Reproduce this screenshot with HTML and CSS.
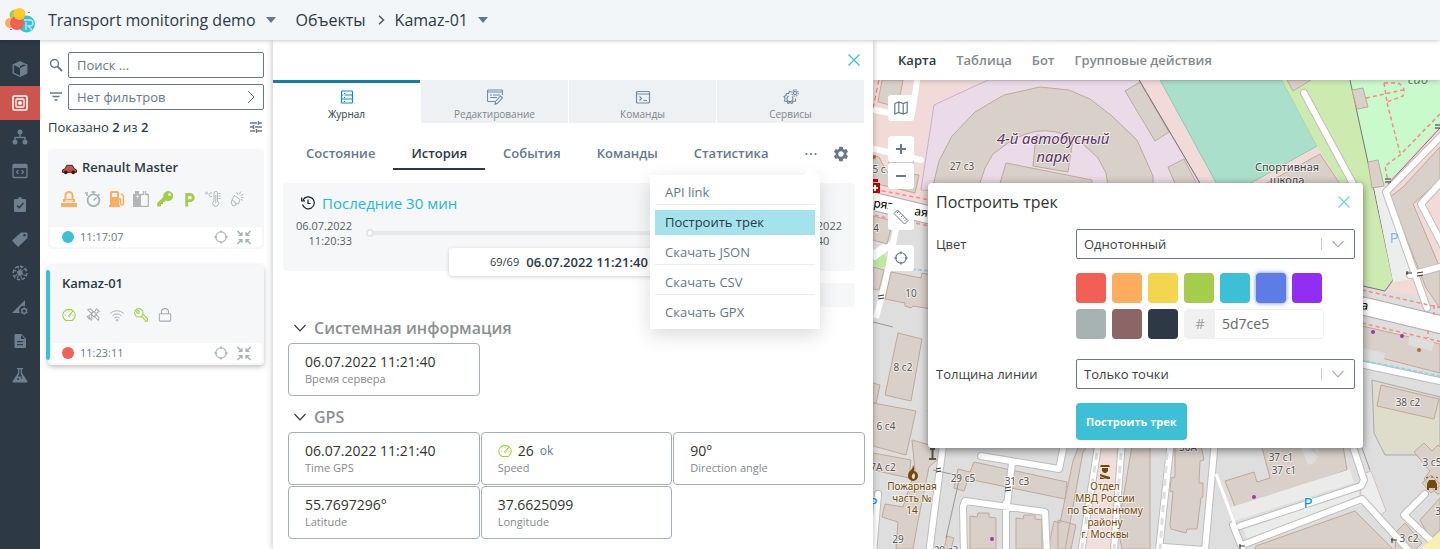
FILE: index.html
```html
<!DOCTYPE html>
<html lang="ru">
<head>
<meta charset="utf-8">
<title>Transport monitoring demo</title>
<link rel="stylesheet" href="styles.css">
</head>
<body>
<svg class="sprite" aria-hidden="true">
  <symbol id="i-target" viewBox="0 0 16 16"><circle cx="8" cy="8" r="6" fill="none" stroke="currentColor" stroke-width="1.3"/><path d="M8 .5v3M8 12.500v3M.5 8h3M12.500 8h3" stroke="currentColor" stroke-width="1.600"/></symbol>
  <symbol id="i-shrink" viewBox="0 0 16 16"><path d="M1 1l4 4M15 1l-4 4M1 15l4-4M15 15l-4-4" fill="none" stroke="currentColor" stroke-width="1.600"/><path d="M6.500 1.500v5h-5zM9.500 1.500v5h5zM1.500 9.500h5v5zM14.500 9.500h-5v5z" fill="currentColor"/></symbol>
  <symbol id="i-gauge" viewBox="0 0 16 16"><path d="M4.500 14.300a7.100 6.800 0 1 1 7 0z" fill="none" stroke="currentColor" stroke-width="1.200"/><path d="M7 9l5-5.200L8.500 10zM3 8h1.500M4.500 4l1 1M8 2.800v1.400M12 8.500h1.500" fill="none" stroke="currentColor"/></symbol>
  <symbol id="i-close" viewBox="0 0 12 12"><path d="M.5.5l11 11M11.500.5l-11 11" stroke="currentColor" fill="none" stroke-width="1.200"/></symbol>
  <symbol id="i-down" viewBox="0 0 12 8"><path d="M.5 1L6 6.800 11.500 1" stroke="currentColor" fill="none" stroke-width="1.200"/></symbol>
  <symbol id="i-cog" viewBox="0 0 24 24"><path fill="currentColor" d="M19.140 12.940c.04-.3.060-.610.060-.940s-.02-.640-.070-.940l2.030-1.580a.490.490 0 0 0 .120-.610l-1.920-3.320a.488.488 0 0 0-.590-.220l-2.390.960a7.030 7.030 0 0 0-1.620-.940l-.360-2.540a.484.484 0 0 0-.480-.410h-3.840c-.240 0-.430.170-.470.410l-.360 2.540c-.590.240-1.130.570-1.620.940l-2.390-.960a.480.480 0 0 0-.590.220L2.740 8.870c-.120.210-.080.470.120.610l2.030 1.580c-.050.3-.090.630-.090.940s.02.640.070.940l-2.030 1.580a.490.490 0 0 0-.120.610l1.920 3.320c.120.220.370.290.590.220l2.390-.960c.5.380 1.030.7 1.620.940l.360 2.540c.05.240.240.410.480.410h3.840c.240 0 .440-.170.470-.410l.360-2.540c.590-.240 1.130-.560 1.620-.940l2.390.960c.220.080.470 0 .590-.220l1.920-3.320a.480.480 0 0 0-.120-.610zM12 15.600a3.600 3.600 0 1 1 0-7.200 3.600 3.600 0 0 1 0 7.200z"/></symbol>
</svg>

<header class="topbar">
  <a class="logo" href="#" aria-label="Home"><svg width="32" height="28" viewBox="0 0 32 28">
    <circle cx="11" cy="9" r="5.500" fill="#a3cd4a"/><circle cx="6" cy="17" r="5" fill="#ffad5f"/><circle cx="22.500" cy="18" r="8.500" fill="#3dc0d5"/><circle cx="13" cy="17" r="7" fill="#f25f57"/><circle cx="15.500" cy="8" r="6" fill="#fbcb2e"/>
    <path d="M22 24v-8M20 14h6a3 3 0 0 1 0 6h-2l4 4" fill="none" stroke="#b9ecf2" stroke-width="1.300"/><path d="M6 23h2v1H6zM24 6h2v1h-2z" fill="#f25f57"/></svg></a>
  <button class="crumb">Transport monitoring demo<span class="caret"></span></button>
  <a class="crumb objects" href="#">Объекты</a>
  <svg class="sep" width="7" height="10" viewBox="0 0 7 10"><path d="M1 .8L5.500 5 1 9.200" fill="none" stroke="#4c5967" stroke-width="1.500"/></svg>
  <button class="crumb">Kamaz-01<span class="caret"></span></button>
</header>

<div class="app">
  <nav class="rail" aria-label="Разделы">
    <a href="#" aria-label="Модели"><svg viewBox="0 0 16 16"><path d="M8 .8l6.800 3v8.400L8 15.300 1.200 12.200V3.800z" fill="none" stroke="#8091a2" stroke-width="1.300"/><path d="M8 7l6.500-3v8.200L8 15zM1.500 4L8 7V5l5-2L8 1z" fill="#8091a2"/></svg></a>
    <a href="#" class="on" aria-label="Объекты"><svg viewBox="0 0 16 16" fill="none" stroke="#fff"><rect x="1" y="1" width="14" height="14" rx="1.500" stroke-width="1.600"/><rect x="4" y="4" width="8" height="8" rx="1" stroke-width="1.300"/><circle cx="8" cy="8" r="2" fill="#fff" stroke="none"/></svg></a>
    <a href="#" aria-label="Структура"><svg viewBox="0 0 16 16"><circle cx="8" cy="3" r="2.500" fill="#8091a2"/><path d="M8 5v4M3 12V8.500h10V12" fill="none" stroke="#8091a2" stroke-width="1.300"/><circle cx="3" cy="13" r="2.500" fill="#8091a2"/><circle cx="13" cy="13" r="2.500" fill="#8091a2"/></svg></a>
    <a href="#" aria-label="Скрипты"><svg viewBox="0 0 16 16" fill="none" stroke="#8091a2" stroke-width="1.300"><rect x="1" y="1.500" width="14" height="13" rx="1"/><path d="M1 3.500h14" stroke-width="3"/><path d="M6.500 7L4.500 9l2 2M9.500 7l2 2-2 2"/></svg></a>
    <a href="#" aria-label="Задачи"><svg viewBox="0 0 16 16"><path d="M3 2h3a2 2 0 0 1 4 0h3a1 1 0 0 1 1 1v11a1 1 0 0 1-1 1H3a1 1 0 0 1-1-1V3a1 1 0 0 1 1-1z" fill="#8091a2"/><path d="M5 8.500l2.200 2.200L11.500 6" fill="none" stroke="#2d3945" stroke-width="1.500"/></svg></a>
    <a href="#" aria-label="Метки"><svg viewBox="0 0 16 16"><path fill-rule="evenodd" d="M9 1.500h5.500a1 1 0 0 1 1 1V7L7 15.200a1.200 1.200 0 0 1-1.700 0L.8 10.500a1.200 1.200 0 0 1 0-1.700zM12.500 3a1.300 1.300 0 1 0 0 2.600 1.300 1.300 0 0 0 0-2.600z" fill="#8091a2"/></svg></a>
    <a href="#" aria-label="Геозоны"><svg viewBox="0 0 16 16" fill="none" stroke="#8091a2"><circle cx="8" cy="8" r="6.800" stroke-width="1.600" stroke-dasharray="3.500 1.800"/><path d="M2 5l12 6M3 11L13 4M6 1l4 14M10 1L5 14" stroke-width="1.200" stroke-dasharray="2.500 1"/><rect x="5.500" y="5.500" width="5" height="5" rx="1" fill="#8091a2" stroke="none" transform="rotate(-25 8 8)"/></svg></a>
    <a href="#" aria-label="Каналы"><svg viewBox="0 0 16 16"><path d="M0 14L13 1v6a4.500 4.500 0 0 0-5 7z" fill="#8091a2"/><circle cx="12.200" cy="12" r="2.300" fill="none" stroke="#8091a2" stroke-width="1.400"/><path d="M12.200 8.200v1.500M12.200 14.300v1.500M9 10l1.300.8M14.200 13.200l1.300.8M9 14l1.300-.8M14.200 10.800l1.300-.8" stroke="#8091a2" stroke-width="1.200"/></svg></a>
    <a href="#" aria-label="Отчеты"><svg viewBox="0 0 16 16"><path fill-rule="evenodd" d="M3 1h6.500L14 5.500V14a1 1 0 0 1-1 1H3.500a1 1 0 0 1-1-1V2zM9 2v4h4zM5 8v1.200h6V8zm0 3v1.200h6V11z" fill="#8091a2"/></svg></a>
    <a href="#" aria-label="Лаборатория"><svg viewBox="0 0 16 16"><path d="M5 1h6v1.300h-1V6l5.300 8a1 1 0 0 1-.8 1.500h-13A1 1 0 0 1 .7 14L6 6V2.300H5z" fill="#8091a2"/><path d="M7.300 2.300h1.400V7l1.500 2.500H5.800L7.300 7z" fill="#2d3945"/><circle cx="6" cy="12" r=".9" fill="#2d3945"/><circle cx="9.500" cy="11" r=".8" fill="#2d3945"/></svg></a>
  </nav>

  <aside class="list">
    <div class="field-row">
      <label for="q" aria-label="Поиск"><svg width="14" height="14" viewBox="0 0 14 14" fill="none" stroke="#687888" stroke-width="1.400"><circle cx="5.500" cy="5.500" r="4"/><path d="M8.500 8.500l4.500 4.500" stroke-width="1.800"/></svg></label>
      <input id="q" class="box" type="text" placeholder="Поиск ...">
    </div>
    <div class="field-row">
      <svg width="14" height="14" viewBox="0 0 14 14" stroke="#687888" stroke-width="1.300"><path d="M1 3h12M3.500 6.500h7M5.500 10h3"/></svg>
      <button class="box filter">Нет фильтров<svg width="8" height="14" viewBox="0 0 8 14"><path d="M1 1l6 6-6 6" fill="none" stroke="#687888"/></svg></button>
    </div>
    <div class="shown"><span>Показано <b>2</b> из <b>2</b></span><svg width="14" height="14" viewBox="0 0 14 14" stroke="#687888" stroke-width="1.400"><path d="M1 3h7M10 3h3M1 7h3M6 7h7M1 11h5M8 11h5M9.500 1v4M4.500 5v4M7.500 9v4"/></svg></div>

    <article class="card">
      <h3><svg width="15" height="11" viewBox="0 0 16 11"><path d="M.5 6l3-1.500L5 1h6l2 3.500 2.500 1.500v2.500H.5z" fill="#e8402a" stroke="#4a2020"/><path d="M5.500 2h2v2.500h-3zM8.500 2h2l1.300 2.500H8.500z" fill="#6b7f8e"/><circle cx="4" cy="8.500" r="2" fill="#222"/><circle cx="12" cy="8.500" r="2" fill="#222"/></svg>Renault Master</h3>
      <div class="sensors">
        <svg viewBox="0 0 16 16"><path d="M4.500 8V4.500a3.500 3.500 0 0 1 7 0V8" fill="none" stroke="#ffad5f" stroke-width="2"/><path d="M2 8h12v3H2zM0 12h16v4H0z" fill="#ffad5f"/><path d="M4 10h8" stroke="#fff"/></svg>
        <svg viewBox="0 0 16 16" fill="none" stroke="#a7b2b2"><circle cx="8.500" cy="9.300" r="5.900" stroke-width="1.800"/><path d="M8.500 9.500l3-3M6.500 1h4M8.500 1v3M13 3l1.500 1.500M0 2h3M1 4h2" stroke-width="1.500"/></svg>
        <svg viewBox="0 0 16 16"><path fill-rule="evenodd" d="M1 1.500A1.500 1.500 0 0 1 2.500 0h6A1.500 1.500 0 0 1 10 1.500V14h1v2H0v-2h1zM3 2v4h5V2z" fill="#ffad5f"/><path d="M10 8h1.500v4.500a1.500 1.500 0 0 0 3 0V5L12 2.500" fill="none" stroke="#ffad5f" stroke-width="1.500"/></svg>
        <svg viewBox="0 0 16 16"><path d="M0 3h2V0h4v3h2v13H0z" fill="#b5b5b5"/><path d="M8 3.500h2.500M10.500 0v4M12.500 0v4M12.500 3.500h2.800v11.800H8" fill="none" stroke="#b5b5b5" stroke-width="1.300"/><path d="M4.500 3.500L3 6h1.500L4 8l2-3H4.500z" fill="#f5f7f9"/></svg>
        <svg viewBox="0 0 16 16"><path fill-rule="evenodd" d="M11 0a5 5 0 1 1-2 9.500L7.500 11H6v2H4v2.500H.2V12L6.300 6A5 5 0 0 1 11 0zm1.500 2.200a1.400 1.400 0 1 0 0 2.800 1.400 1.400 0 0 0 0-2.800z" fill="#a3cd4a"/></svg>
        <svg viewBox="0 0 16 16"><path d="M5.700 15.500V3.500h3.500a3 3 0 0 1 0 6.200h-3.500" fill="none" stroke="#a3cd4a" stroke-width="2.800"/></svg>
        <svg viewBox="0 0 16 16" fill="none" stroke="#b5b9bc"><circle cx="1.500" cy="2" r="1"/><path d="M7 2a2 2 0 1 0 0 3.500M9 10V2a1.700 1.700 0 0 1 3.500 0v8a3 3 0 1 1-3.500 0zM10.800 4v8M13.500 2.500h2M13.500 5h2M13.500 7.500h2"/></svg>
        <svg viewBox="0 0 16 16" fill="none" stroke="#b5b9bc"><path d="M5.500 4.500l5.500 4M3 9l2.500-4.500M11 8.500L9.500 13 6 12.500M3 9l-1 3 2 3 3-1-1-3zM8.500 3.500L8 1.500M10 3.500l2-3M11.500 5l3-2M12 6.500h2.500M12 8l2 1.500"/></svg>
      </div>
      <footer><span class="dot teal"></span><time>11:17:07</time><button aria-label="Показать"><svg width="14" height="14"><use href="#i-target"/></svg></button><button aria-label="Следить"><svg width="16" height="15"><use href="#i-shrink"/></svg></button></footer>
    </article>
    <article class="card current">
      <h3>Kamaz-01</h3>
      <div class="sensors small">
        <svg class="green"><use href="#i-gauge"/></svg>
        <svg viewBox="0 0 16 16" fill="none" stroke="#a7abae" stroke-width="1.200"><path d="M6 7l3-3 3 3-3 3zM2 2l3-1 3 3-2 2zM10 10l2-2 3 3-1 3zM10 4l2-3 3 3-3 2M6 7l-3 2 3 5 1-2-1-5M1 9l3 4"/></svg>
        <svg viewBox="0 0 16 16" fill="none" stroke="#a7abae"><path d="M0 6.500a11 11 0 0 1 16 0M2.700 9a7.500 7.500 0 0 1 10.600 0M5 11.500a4.500 4.500 0 0 1 6 0"/><circle cx="8" cy="14" r="1"/></svg>
        <svg viewBox="0 0 16 16" fill="none" stroke="#a3cd4a" stroke-width="1.200"><circle cx="5.500" cy="5.500" r="4.800"/><circle cx="4.500" cy="4.500" r="1.500"/><path d="M7 10l3 .5 1 2h1.500l.5 2.500h2.300v-3L10 7"/></svg>
        <svg viewBox="0 0 16 16" fill="none" stroke="#a7abae" stroke-width="1.200"><rect x="1.500" y="6.500" width="13" height="8.500" rx="1"/><path d="M4 6.500V4.300a4 3.600 0 0 1 8 0v2.200"/></svg>
      </div>
      <footer><span class="dot red"></span><time>11:23:11</time><button aria-label="Показать"><svg width="14" height="14"><use href="#i-target"/></svg></button><button aria-label="Следить"><svg width="16" height="15"><use href="#i-shrink"/></svg></button></footer>
    </article>
  </aside>

  <section class="detail">
    <div class="detail-top"><button class="x" aria-label="Закрыть"><svg width="12" height="12"><use href="#i-close"/></svg></button></div>
    <nav class="tabs">
      <a href="#" class="on"><svg viewBox="0 0 16 16" fill="none" stroke="#0c8bc0" stroke-width="1.200"><rect x="2.500" y="2" width="11" height="12" rx="1"/><path d="M5.500 6h8M2.500 10h3M5.500 10h8M2.500 6h1.500M5.500 4v1M5.500 8v1M5.500 12v1"/></svg>Журнал</a>
      <a href="#"><svg viewBox="0 0 16 16" fill="none" stroke="#7389a0" stroke-width="1.100"><path d="M8 12.500H1.500a1 1 0 0 1-1-1V2a1 1 0 0 1 1-1h13a1 1 0 0 1 1 1v4M.5 3h15M3 6h2M6 6h7M3 8.500h7M8.500 12.500l5-5.500 2 1.800-5 5.500-2.500 1z"/></svg>Редактирование</a>
      <a href="#"><svg viewBox="0 0 16 16" fill="none" stroke="#7389a0" stroke-width="1.200"><rect x="1.500" y="2.500" width="13" height="11.500" rx="1"/><path d="M1.500 5h13M4.500 7.500l2 2-2 2M8.500 11.500H12"/></svg>Команды</a>
      <a href="#"><svg viewBox="0 0 16 16" fill="none" stroke="#7389a0" stroke-width="1.100"><circle cx="12" cy="4" r="1.600"/><circle cx="12" cy="4" r="3.200" stroke-dasharray="1.500 1"/><path d="M8 3L6.500 2.500 5.500 4.500 3.500 4.500 3 6.500 1 7.500l1 2-.5 2.500 2.500.5 1 2 2-1 2 1 1-2 2.500-.5V9.500M9 7.500A3 3 0 1 1 5.500 7"/></svg>Сервисы</a>
    </nav>
    <nav class="subtabs">
      <a href="#">Состояние</a><a href="#" class="on">История</a><a href="#">События</a><a href="#">Команды</a><a href="#">Статистика</a>
      <div class="more">
        <button aria-label="Ещё"><svg width="12" height="4" viewBox="0 0 12 4" fill="#687888"><circle cx="1.500" cy="2" r="1.100"/><circle cx="6" cy="2" r="1.100"/><circle cx="10.500" cy="2" r="1.100"/></svg></button>
        <ul class="menu">
          <li><a href="#">API link</a></li><li><a href="#" class="on">Построить трек</a></li><li><a href="#">Скачать JSON</a></li><li><a href="#">Скачать CSV</a></li><li><a href="#">Скачать GPX</a></li>
        </ul>
      </div>
      <button class="gear" aria-label="Настройки"><svg width="18" height="18"><use href="#i-cog"/></svg></button>
    </nav>

    <div class="timeline">
      <button class="range"><svg width="14" height="14" viewBox="0 0 14 14" fill="none" stroke="#1c2127" stroke-width="1.200"><path d="M1.500 8.500A6 6 0 1 0 2 4M.7 1.500v3.300H4M7 3.500v4h2.500"/></svg>Последние 30 мин</button>
      <div class="track">
        <div class="stamp">06.07.2022<b>11:20:33</b></div>
        <div class="bar"><span class="knob"></span></div>
        <div class="stamp end">06.07.2022<b>11:21:40</b></div>
      </div>
      <div class="current-point"><small>69/69</small><b>06.07.2022 11:21:40</b></div>
    </div>
    <div class="strip"></div>

    <h2><svg width="12" height="8"><use href="#i-down"/></svg>Системная информация</h2>
    <dl class="grid">
      <div><dd>06.07.2022 11:21:40</dd><dt>Время сервера</dt></div>
    </dl>
    <h2><svg width="12" height="8"><use href="#i-down"/></svg>GPS</h2>
    <dl class="grid">
      <div><dd>06.07.2022 11:21:40</dd><dt>Time GPS</dt></div>
      <div><dd><svg class="green" width="14" height="14"><use href="#i-gauge"/></svg>26 <small>ok</small></dd><dt>Speed</dt></div>
      <div><dd>90°</dd><dt>Direction angle</dt></div>
      <div><dd>55.7697296°</dd><dt>Latitude</dt></div>
      <div><dd>37.6625099</dd><dt>Longitude</dt></div>
    </dl>
  </section>

  <main class="mapside">
    <nav class="maptabs"><a href="#" class="on">Карта</a><a href="#">Таблица</a><a href="#">Бот</a><a href="#">Групповые действия</a></nav>
    <div class="map">
      <svg class="tiles" viewBox="873 80 567 469" preserveAspectRatio="xMinYMin slice">
        <rect x="873" y="80" width="567" height="469" fill="#dedede"/>
        <path d="M873 80h567v220L1363 286 1200 240 928 208 873 190z" fill="#f2dad9"/>
        <path d="M921 190L934 105 988 80h151l62 105v20z" fill="#ebdbe8" stroke="#c9b0c8"/>
        <g fill="#d9d0c9" stroke="#bfa998">
          <path d="M932 190l7-29 13-25 23-24 29-17 36-8 29 3 21 9 22 17 25 24 16 36v10h-45l-2-13-8-15-15-14q-38-26-75-1l-15 11-8 14-6 18z"/>
          <path d="M1036 135l37 4-5 33-35-6zM1006 163l86 17v10h-94zM1125 91l15-9 29 50-14 9zM1168 167l16-8 14 27h-22z"/>
          <path d="M882 80h21l-5 27-20-5z"/>
        </g>
        <path d="M1138 78l66 112" stroke="#777" fill="none"/>
        <path d="M1160 80h122l35 66-75 42h-23z" fill="#aae0cb" stroke="#8cc9b2"/>
        <path d="M1282 80h68l23 107 20 93-8 11-24-5-20-102-24-38z" fill="#cdebb0"/>
        <path d="M1350 80h90v45l-52 56-14 8z" fill="#c8facc"/>
        <path d="M1350 80l24 110 19 90-8 11-22-5M1440 128l-52 56" stroke="#777" fill="none"/>
        <path d="M1374 187l10-2 20 55 16 38-27 4z" fill="#eceeee"/>
        <g fill="#d9d0c9" stroke="#bfa998">
          <path d="M1287 80h24l-18 11zM1352 90l11-2 5 19-11 2zM1368 162l10-2 6 26-12 2zM1320 154l24 36h-90z"/>
          <path d="M1403 187l37-40v33l-27 24 27 64v40l-14-20-36-91z"/>
        </g>
        <g fill="none" stroke="#fa8b80" stroke-width="1.500" stroke-dasharray="4 3">
          <path d="M1384 83h14q6 3 6 7l-1 6-16 6M1384 83l3 19M1366 98l37-8M1387 103l13 50M1440 114l-40 41-15 11 3 16"/>
        </g>
        <g fill="none" stroke-linecap="round" stroke-linejoin="round">
          <path d="M1304 93l54 100M1442 135l-56 57 41 116M1443 180l-22 24 22 42M1410 275l30-8" stroke="#c3bcbc" stroke-width="8"/>
          <path d="M1304 93l54 100M1442 135l-56 57 41 116M1443 180l-22 24 22 42M1410 275l30-8" stroke="#fff" stroke-width="6"/>
          <path d="M870 109l24 5M912 114l5-34M870 148l51 12" stroke="#fff" stroke-width="6"/>
        </g>
        <path d="M879 80l-6 28" stroke="#f66" stroke-dasharray="5 3" fill="none"/>
        <path d="M873 155l6 2 8 15 32 3-4 18-42-10z" fill="#d9d0c9" stroke="#bfa998"/>
        <path d="M868 200l66 16M1355 304l95 23" stroke="#aaa" stroke-width="19"/>
        <path d="M868 200l66 16M1355 304l95 23" stroke="#fff" stroke-width="17"/>
        <path d="M868 188l62 12M868 214l62 12M1362 290l80 18M1362 323l80 19M1434 305v10M1428 330v8" stroke="#fa8b80" stroke-width="1.500" stroke-dasharray="4 3"/>
        <path d="M1362 326l78 18v29l-78-20z" fill="#d9d0c9" stroke="#bfa998"/>
        <path d="M1409 336l25 6-2 9-24-6zM1362 348l23 5-1 7-22-5z" fill="#dedede"/>
        <path d="M1360 364l84 18" stroke="#bbb" stroke-width="8"/><path d="M1360 364l84 18" stroke="#fff" stroke-width="6"/>
        <path d="M1360 360l84 17M912 269l18 2" stroke="#9bd0de" stroke-width="2" stroke-dasharray="4 2"/>
        <path d="M1372 380l68 17v58h-55l-11-22z" fill="#dedccb" stroke="#aaa"/>
        <circle cx="880" cy="261" r="7" fill="#bce7a0"/>
        <path d="M897 224l-12 60-9 34M873 258l20-15M873 254l15-10" fill="none" stroke="#fff" stroke-width="6"/>
        <g fill="#d9d0c9" stroke="#bfa998">
          <path d="M873 216l20 5-6 23-14-4zM873 267l11 3-5 20-6-1zM891 272l30 6 1-5 10 2v34l-19-3-2 2-6-2v-3l-20-4zM898 333l24 6-11 62-26-6zM873 383l7 2-4 18h-3zM873 403l43 8-10 44-33-9z"/>
          <path d="M912 440l18 5 3-12 12 2-8 25-8 7-11 54-5 28h-17l2-27-16-5 3-13 18 3 12-36zM873 453l38 7-2 18-36-8z"/>
          <path d="M974 462l93 20-2 17-97-20-4 12-10-3 4-19 12 3zM1073 461l8-21h10l-8 12-18 98h-17l6-29 6 2zM1058 520l18 5-5 24h-13z"/>
          <path d="M970 516l7 1 1-4h11v4l7 1v31h-26zM1016 518l7 1 1-4h11v4l7 1v29h-26zM947 536l7 2-3 11h-7zM928 410l7 3-3 14z"/>
          <path d="M1133 440h17v109h-28l-4-20zM1175 445h26l3 15-4 1-1 22h4v14l-2 1-4 31h-10l-1 4-15-4-1-4 3-33-3-1 1-13 4-1zM1260 440h82l5 30-111 39-11-28 29-9 3 10 13-4z"/>
          <path d="M1256 546l99-35 38 38h-138zM1381 385l58 14-5 20-57-13zM1414 452l10-9 8 8 6-6 8 8-1 40-8 1-13-15 6-8zM1420 520l20-22v32l-10 9zM1396 532l9-9 17 20-8 8h-19zM1422 483l9-8 10 10-10 8z"/>
        </g>
        <path d="M1298 440h12l9 15-5 8-6 2zM1310 450l9 7-2-12z" fill="#dedede"/>
        <path d="M1097 446h20l-7 104h-29z" fill="#f2dfdd"/>
        <path d="M1233 514l119-38M1245 534l115-36" stroke="#ebebea" stroke-width="14"/>
        <path d="M1360 475l11-4 15 40-9 6-16-20z" fill="#eceeee" stroke="#d7bdb8"/>
        <g fill="none" stroke-linecap="round" stroke-linejoin="round">
          <path d="M943 445l-7 54-7 55M981 456l78 13 5-24M1012 463l-5 42M964 554l-1-47 2-6 80 11 2 42M1006 503v50M1099 440l-19 120M1122 440l-8 110M1171 440l-12 110M1164 547l40 3M1215 440l-10 110M1233 525l12 30M1240 526l121-40 3-6-14-42M1242 545l120-46 50 55M1425 494l-21 21 40 38M873 554l5-60" stroke="#bfbdbc" stroke-width="8"/>
          <path d="M943 445l-7 54-7 55M981 456l78 13 5-24M1012 463l-5 42M964 554l-1-47 2-6 80 11 2 42M1006 503v50M1099 440l-19 120M1122 440l-8 110M1171 440l-12 110M1164 547l40 3M1215 440l-10 110M1233 525l12 30M1240 526l121-40 3-6-14-42M1242 545l120-46 50 55M1425 494l-21 21 40 38M873 554l5-60" stroke="#fff" stroke-width="6"/>
          <path d="M1099 440l-19 120M1122 440l-8 110M1168 440l-8 110" stroke="#dedede" stroke-width="3" stroke-dasharray="7 6" stroke-linecap="butt"/>
        </g>
        <path d="M1216 474l20 54" stroke="#fff" stroke-width="3"/>
        <path d="M933 470l27 6-14 62M1362 448l8 22M873 322l20 5" fill="none" stroke="#888" stroke-width=".8"/>
        <path d="M1440 532l-20 17h20z" fill="#f7f0b0"/>
        <g fill="#a038a8"><circle cx="992" cy="539" r="2"/><circle cx="1254" cy="497" r="2"/><circle cx="1373" cy="332" r="2"/><circle cx="1402" cy="336" r="2"/></g>
        <circle cx="1419" cy="350" r="2" fill="#b66d28"/><circle cx="874" cy="157" r="2" fill="#b66d28"/>
        <path d="M870 183h10v10h-10zM873 179h5v3h-5z" fill="#bf0000"/><path d="M875 185v6M872 188h6" stroke="#fff" stroke-width="2"/>
        <path d="M930 449h5M932.500 449v10M929 459h7" stroke="#555" stroke-width="2"/>
        <g stroke="#333"><path d="M936 469l5-1M936 472l5-1M1005 488l6-1M1005 491l6-1M878 296l6-1M878 299l6-1M1417 273l6-1M1417 276l6-1M1385 179h6M1385 182h6M1435 125h6M1435 128h6M1406 273h6M1407 271v4M1239 546h6M1240 544v5M1391 540h6M1392 538v5"/></g>
        <path d="M913 465q2 4 1 6 4 1 4 5a5 5 0 0 1-10 0q0-4 3-6 2-2 2-5z" fill="#734a08"/><path d="M913 479q-3-3 1-6 2 3 0 6z" fill="#eddccb"/>
        <path d="M1101 465h8l1 2h-10zM1102 468h6v3l-2 2h-2l-2-2zM1100 474l10 3v2h-3l-7-3zM1100 477l6 2h-6z" fill="#734a08"/>
        <path d="M1427 484l2-4h6l2 4v6h-2v-2h-6v2h-2z" fill="#734a08"/><path d="M1426 478l2-1M1431 477h2M1436 477l2 1" stroke="#734a08"/>
        <g class="num">
          <text x="962" y="170">27 с3</text><text x="911" y="297">10</text><text x="903" y="371">8 с2</text><text x="886" y="430">6 с4</text><text x="883" y="471">7А с2</text><text x="963" y="482">29 с5</text><text x="1017" y="485">31 с3</text><text x="898" y="543">29</text><text x="1281" y="461">37 с1</text><text x="1284" y="474">37 с1</text><text x="1408" y="406">38 с2</text><text x="1409" y="542">3 с2</text><text x="1432" y="466">3 с5</text><text x="1438" y="515">3</text><text x="879" y="173">5 с</text><text x="876" y="232">4</text><text x="1188" y="451">30А</text><text x="946" y="554">29 с3</text>
        </g>
        <g class="road"><text x="873" y="207" transform="rotate(8 873 207)">ряз</text><text x="914" y="215" transform="rotate(8 914 215)">ая</text><text x="1361" y="309" transform="rotate(10 1361 309)">а</text></g>
        <g class="busp"><text x="1053" y="144">4-й автобусный</text><text x="1053" y="162">парк</text></g>
        <g class="place"><text x="1287" y="171">Спортивная</text><text x="1287" y="184">школа</text></g>
        <g class="brown"><text x="912" y="490">Пожарная</text><text x="912" y="502">часть №</text><text x="912" y="514">14</text><text x="1105" y="490">Отдел</text><text x="1105" y="502">МВД России</text><text x="1105" y="514">по Басманному</text><text x="1105" y="526">району</text><text x="1105" y="538">г. Москвы</text></g>
        <text class="garden" x="1418" y="84">сад</text>
        <g class="park"><text x="1308" y="508">P</text><text x="873" y="508">P</text><text x="1394" y="243" opacity=".5">P</text></g>
      </svg>

      <div class="tools">
        <button aria-label="Слои"><svg width="14" height="14" viewBox="0 0 14 14" fill="none" stroke="#687888" stroke-width="1.200"><path d="M.8 2.500l4-1.500 4.400 1.500 4-1.500v10.500l-4 1.500-4.400-1.500-4 1.500zM4.800 1v10.500M9.200 2.500V13"/></svg></button>
        <div class="zoom"><button aria-label="Приблизить"><svg width="12" height="12" viewBox="0 0 12 12"><path d="M6 1v10M1 6h10" stroke="#687888" stroke-width="2"/></svg></button><button aria-label="Отдалить"><svg width="12" height="12" viewBox="0 0 12 12"><path d="M1 6h10" stroke="#687888" stroke-width="2"/></svg></button></div>
        <button aria-label="Линейка"><svg width="16" height="16" viewBox="0 0 16 16" fill="none" stroke="#687888"><path d="M1 4.500L4.500 1 15 11.500 11.500 15zM5.500 2.500L4 4M7.500 4.500L6.500 5.500M9.500 6.500L8 8M11.500 8.500l-1 1M13 10.500L11.500 12"/></svg></button>
        <button aria-label="Моё положение"><svg width="14" height="14"><use href="#i-target"/></svg></button>
      </div>

      <form class="dialog" role="dialog" aria-labelledby="dt">
        <div class="dialog-head"><h1 id="dt">Построить трек</h1><button type="button" class="x" aria-label="Закрыть"><svg width="12" height="12"><use href="#i-close"/></svg></button></div>
        <div class="row"><label for="col">Цвет</label>
          <div class="select"><select id="col"><option>Однотонный</option></select><i></i><svg width="12" height="8"><use href="#i-down"/></svg></div></div>
        <div class="swatches">
          <button type="button" class="c1" aria-label="f25f57"></button><button type="button" class="c2" aria-label="ffad5f"></button><button type="button" class="c3" aria-label="f3d54e"></button><button type="button" class="c4" aria-label="a3cd4a"></button><button type="button" class="c5" aria-label="3dc0d5"></button><button type="button" class="c6" aria-label="5d7ce5"></button><button type="button" class="c7" aria-label="922ef2"></button><button type="button" class="c8" aria-label="a7b2b2"></button><button type="button" class="c9" aria-label="8c6666"></button><button type="button" class="c10" aria-label="2d3945"></button>
          <div class="hex"><label for="hex">#</label><input id="hex" type="text" value="5d7ce5"></div>
        </div>
        <div class="row"><label for="wid">Толщина линии</label>
          <div class="select"><select id="wid"><option>Только точки</option></select><i></i><svg width="12" height="8"><use href="#i-down"/></svg></div></div>
        <button type="submit" class="go">Построить трек</button>
      </form>
    </div>
  </main>
</div>
</body>
</html>
```
FILE: styles.css
```css
* { box-sizing: border-box; }
html, body { height: 100%; margin: 0; }
body { display: flex; flex-direction: column; overflow: hidden; background: #fff; color: #2d3945; font: 13px/18px "Open Sans", "Noto Sans", sans-serif; }
a { color: inherit; text-decoration: none; }
button { font: inherit; color: inherit; background: none; border: 0; padding: 0; }
h1, h2, h3, dl, dd, ul { margin: 0; padding: 0; }
b { font-weight: 600; }
svg { display: block; flex: none; }
.sprite { position: absolute; width: 0; height: 0; }
.green { color: #a3cd4a; }

.topbar { display: flex; align-items: center; height: 40px; flex: none; background: #f3f6f9; font-size: 16px; padding-left: 4px; position: relative; z-index: 5; box-shadow: 0 1px 4px rgba(0,0,0,.2); }
.logo { width: 44px; }
.crumb { display: flex; align-items: center; gap: 10px; font-weight: 500; }
.caret { border: 5px solid transparent; border-top: 6px solid #687888; border-bottom: 0; }
.objects { margin-left: 20px; }
.sep { margin: 0 10px 0 12px; }

.app { display: flex; flex: 1; min-height: 0; }
.rail { width: 40px; flex: none; background: #2d3945; padding-top: 12px; }
.rail a { display: flex; align-items: center; justify-content: center; height: 34px; opacity: .8; }
.rail a.on { background: #cc554f; opacity: 1; }
.rail svg { width: 16px; height: 16px; }

.list { width: 233px; flex: none; padding: 12px 9px 0 8px; }
.field-row { display: flex; align-items: center; gap: 5px; padding-left: 1px; margin-bottom: 6px; }
.box { flex: 1; min-width: 0; height: 26px; border: 1px solid #687888; border-radius: 2px; padding: 0 8px; font: inherit; color: #687888; background: #fff; }
.box::placeholder { color: #687888; opacity: 1; }
.filter { display: flex; align-items: center; justify-content: space-between; }
.shown { display: flex; align-items: center; justify-content: space-between; margin: 8px 1px 13px 0; }
.card { display: flex; flex-direction: column; height: 100px; background: #f5f7f9; border-radius: 4px; padding: 0 2px 2px; margin-bottom: 16px; position: relative; }
.card h3 { display: flex; align-items: flex-end; gap: 5px; font-size: 13px; font-weight: 600; line-height: 18px; padding: 9px 0 0 12px; }
.card h3 svg { margin-bottom: 1px; }
.sensors { display: flex; gap: 8px; padding: 15px 0 0 11px; }
.sensors svg { width: 16px; height: 16px; }
.sensors.small { gap: 10px; padding: 16px 0 0 12px; }
.sensors.small svg { width: 14px; height: 14px; }
.card footer { display: flex; align-items: center; height: 20px; background: #fff; border-radius: 4px; margin-top: auto; padding: 0 10px 0 12px; font-size: 11px; color: #687888; }
.card footer button { color: #a7b2b2; margin-left: 8px; }
.card footer time { margin-right: auto; }
.dot { width: 12px; height: 12px; border-radius: 50%; margin-right: 6px; }
.teal { background: #3dc0d5; }
.red { background: #f25f57; }
.current { box-shadow: 0 2px 5px rgba(0,0,0,.25); }
.current::before { content: ""; position: absolute; left: -2px; top: 5px; bottom: 5px; width: 4px; border-radius: 2px; background: #3dc0d5; }

.detail { width: 600px; flex: none; background: #fff; box-shadow: 0 0 6px rgba(0,0,0,.3); position: relative; z-index: 2; }
.detail-top { display: flex; justify-content: flex-end; align-items: center; height: 40px; padding-right: 13px; }
.x { color: #3dc0d5; }
.tabs { display: grid; grid-template-columns: repeat(4, 1fr); gap: 1px; margin-right: 9px; }
.tabs a { display: flex; flex-direction: column; align-items: center; height: 43px; padding-top: 9px; background: #eef1f4; color: #808488; font-size: 10px; line-height: 18px; }
.tabs a.on { background: #fff; color: #2d3945; border-top: 3px solid #107fae; padding-top: 6px; }
.tabs svg { width: 16px; height: 16px; }
.subtabs { display: flex; align-items: center; margin: 15px 23px 13px 15px; font-weight: 600; color: #687888; }
.subtabs > a { padding: 6px 18px; border-bottom: 2px solid transparent; }
.subtabs > a.on { color: #2d3945; border-color: #2d3945; }
.more { position: relative; margin-left: auto; }
.more > button { display: block; height: 20px; }
.gear { margin-left: 15px; color: #687888; }
.menu { position: absolute; z-index: 4; top: 31px; right: -3px; width: 170px; padding: 5px 5px 0; background: #fff; list-style: none; font-weight: 400; box-shadow: 0 6px 18px rgba(0,0,0,.15); }
.menu::before { content: ""; position: absolute; top: -5px; right: 3px; width: 12px; height: 12px; background: #fff; transform: rotate(45deg); }
.menu li { position: relative; height: 25px; margin-bottom: 5px; border-bottom: 1px solid #e9edf1; }
.menu li:last-child { border: 0; margin-bottom: 4px; }
.menu a { display: block; padding: 0 10px; line-height: 25px; }
.menu a.on { background: #a5e3ec; color: #2d3945; }

.timeline { position: relative; height: 88px; margin: 0 18px 12px 10px; padding: 11px 13px 0; border-radius: 4px; background: #f5f7f9; }
.range { display: flex; align-items: center; gap: 7px; margin-left: 5px; font-size: 15px; color: #26b8d0; }
.track { display: flex; justify-content: space-between; margin-top: 6px; }
.stamp { font-size: 11px; line-height: 15px; color: #565f68; text-align: right; }
.stamp.end { text-align: left; }
.stamp b { display: block; font-weight: 500; }
.bar { flex: 1; height: 4px; margin: 13px 14px 0; background: #e9e9e9; }
.knob { display: block; width: 8px; height: 8px; margin-top: -2px; border: 2px solid #e4e4e4; border-radius: 50%; background: #fff; }
.current-point { position: absolute; left: 166px; top: 65px; width: 240px; height: 28px; padding-left: 41px; display: flex; align-items: center; gap: 7px; background: #fff; border-radius: 4px; box-shadow: 0 1px 4px rgba(0,0,0,.18); }
.current-point small { font-size: 11px; }
.strip { height: 24px; margin: 0 18px 11px 400px; background: #f5f7f9; border-radius: 4px; }

h2 { display: flex; align-items: center; gap: 8px; height: 20px; margin: 0 21px 5px; font-size: 16px; font-weight: 600; color: #8b9092; }
h2 svg { color: #2d3945; }
.grid { display: grid; grid-template-columns: repeat(3, 1fr); gap: 1px; margin: 0 8px 11px 15px; }
.grid div { display: flex; flex-direction: column; height: 53px; padding: 9px 16px 0; border: 1px solid #a6adb4; border-radius: 4px; }
.grid dd { display: flex; align-items: center; gap: 6px; font-size: 14px; color: #333; }
.grid small { font-size: 12px; color: #687888; }
.grid dt { order: 2; font-size: 11px; line-height: 16px; color: #84898f; }

.mapside { flex: 1; min-width: 0; display: flex; flex-direction: column; }
.maptabs { display: flex; align-items: center; gap: 20px; height: 40px; padding-left: 25px; font-weight: 600; color: #84898c; position: relative; z-index: 1; background: #fff; box-shadow: 0 1px 5px rgba(0,0,0,.2); }
.maptabs .on { color: #2d3945; }
.map { position: relative; flex: 1; overflow: hidden; }
.tiles { position: absolute; inset: 0; width: 100%; height: 100%; }
.tiles text { font-family: "Noto Sans", sans-serif; text-anchor: middle; paint-order: stroke; stroke: rgba(255,255,255,.6); stroke-width: 2px; }
.num { font-size: 10px; fill: #555; }
.tiles .road text { text-anchor: start; font-size: 12px; fill: #000; }
.busp { font-size: 15px; font-style: italic; fill: #5d3266; }
.place { font-size: 11px; fill: #444; }
.brown { font-size: 10px; fill: #734a08; }
.garden { font-size: 13px; font-style: italic; fill: #3a9a3a; }
.park { font-size: 15px; fill: #0092da; }
.tools { position: absolute; left: 15px; top: 15px; display: flex; flex-direction: column; gap: 15px; }
.tools button { display: flex; align-items: center; justify-content: center; width: 26px; height: 26px; background: #fff; border-radius: 3px; color: #687888; }
.zoom { display: flex; flex-direction: column; gap: 1px; background: #ccc; border-radius: 3px; }

.dialog { position: absolute; left: 55px; top: 103px; width: 435px; padding: 8px; background: #fff; border-radius: 4px; box-shadow: 0 2px 8px rgba(0,0,0,.5); color: #3d4043; }
.dialog-head { display: flex; justify-content: space-between; align-items: center; height: 22px; margin-bottom: 16px; padding-right: 5px; }
.dialog h1 { font-size: 16px; font-weight: 500; color: #333; }
.dialog .x { opacity: .75; }
.row { display: grid; grid-template-columns: 140px 1fr; align-items: center; }
.select { display: flex; align-items: center; position: relative; height: 30px; border: 1px solid #687888; border-radius: 2px; padding-right: 10px; color: #a7b2b2; }
select { flex: 1; height: 28px; appearance: none; border: 0; background: none; padding: 0 7px; font: inherit; color: #3d4043; }
.select i { width: 1px; height: 12px; background: #ccc; margin-right: 10px; }
.swatches { display: flex; flex-wrap: wrap; gap: 6px; margin: 14px 0 20px 140px; padding-right: 30px; }
.swatches button { width: 30px; height: 30px; border-radius: 4px; }
.c1 { background: #f25f57; } .c2 { background: #ffad5f; } .c3 { background: #f3d54e; } .c4 { background: #a3cd4a; } .c5 { background: #3dc0d5; }
.swatches .c6 { background: #5d7ce5; box-shadow: 0 0 4px #5d7ce5; }
.c7 { background: #922ef2; } .c8 { background: #a7b2b2; } .c9 { background: #8c6666; } .c10 { background: #2d3945; }
.hex { display: flex; width: 140px; height: 30px; border: 1px solid #efefef; border-radius: 4px; overflow: hidden; font-size: 14px; }
.hex label { width: 30px; background: #f0f0f0; color: #98a1a4; text-align: center; line-height: 28px; }
.hex input { flex: 1; min-width: 0; border: 0; padding: 0 7px; font: inherit; color: #666; }
.go { display: block; height: 37px; margin: 14px 0 0 140px; padding: 0 10px; border-radius: 4px; background: #3dc0d5; color: #fff; font-size: 11px; font-weight: 700; }
```
